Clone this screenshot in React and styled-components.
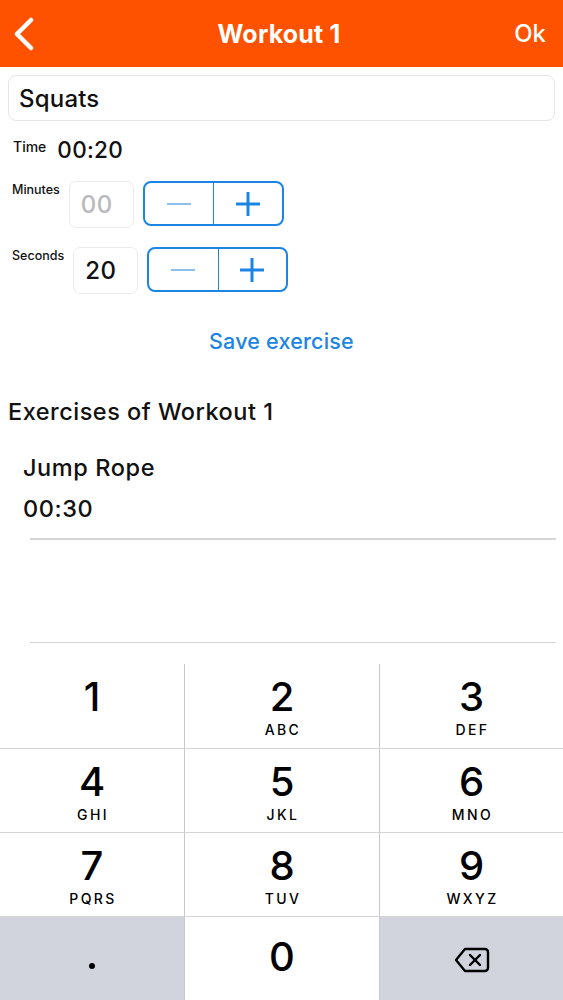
import React from "react";
import styled, { createGlobalStyle } from "styled-components";

const Global = createGlobalStyle`
  html, body { margin: 0; padding: 0; background: #fff; }
  body { font-family: Inter, "Noto Sans", "Liberation Sans", sans-serif; color: #111; }
  * { box-sizing: border-box; }
`;

const Page = styled.div`
  min-height: 100vh;
  display: flex;
  flex-direction: column;
`;

const Header = styled.header`
  height: 67px;
  background: #ff5200;
  display: grid;
  grid-template-columns: 1fr auto 1fr;
  align-items: center;
  padding: 0 17px 0 12px;
  color: #fff;
`;

const BackBtn = styled.div`
  display: flex;
  align-items: center;
`;

const Title = styled.div`
  font-size: 25px;
  font-weight: 700;
  letter-spacing: 0.2px;
`;

const OkBtn = styled.div`
  justify-self: end;
  font-size: 24px;
  font-weight: 500;
`;

const Body = styled.main`
  padding: 8px 8px 0;
  display: flex;
  flex-direction: column;
`;

const NameField = styled.div`
  height: 46px;
  border: 1px solid #e6e6e6;
  border-radius: 8px;
  display: flex;
  align-items: center;
  padding-left: 10px;
  font-size: 24px;
  font-weight: 500;
  letter-spacing: 0.2px;
`;

const TimeRow = styled.div`
  display: flex;
  align-items: flex-start;
  gap: 11px;
  margin-top: 15px;
  padding-left: 5px;
`;

const SmallLabel = styled.span`
  font-size: ${(p) => p.$size || 12.5}px;
  font-weight: 500;
  padding-top: ${(p) => p.$top || 0}px;
`;

const TimeValue = styled.span`
  font-size: 22.5px;
  font-weight: 500;
  letter-spacing: 0.3px;
`;

const StepRow = styled.div`
  display: flex;
  align-items: flex-start;
  gap: 9px;
  margin-top: ${(p) => p.$mt}px;
  padding-left: 4px;
`;

const NumBox = styled.div`
  width: 65px;
  height: 47px;
  border: 1px solid #ececec;
  border-radius: 7px;
  display: flex;
  align-items: center;
  padding-left: 11px;
  font-size: 24px;
  font-weight: 500;
  letter-spacing: 0.5px;
  color: ${(p) => (p.$placeholder ? "#b9b9bd" : "#111")};
`;

const Stepper = styled.div`
  width: 141px;
  height: 45px;
  border: 2px solid #1c84e3;
  border-radius: 8px;
  display: grid;
  grid-template-columns: 1fr 1fr;
  overflow: hidden;
`;

const StepBtn = styled.div`
  display: flex;
  align-items: center;
  justify-content: center;
  border-left: ${(p) => (p.$divider ? "1px solid #1c84e3" : "none")};
`;

const SaveLink = styled.div`
  margin-top: 34px;
  text-align: center;
  color: #1c84e3;
  font-size: 21.5px;
  font-weight: 500;
  letter-spacing: 0.2px;
`;

const SectionTitle = styled.h2`
  margin: 43px 0 0;
  font-size: 23.5px;
  font-weight: 500;
  letter-spacing: 0.5px;
`;

const ExerciseItem = styled.div`
  padding: 0 0 0 15px;
  margin-top: 27px;
  display: flex;
  flex-direction: column;
  gap: 12px;
  font-size: 23.5px;
  font-weight: 500;
  letter-spacing: 0.6px;
`;

const Divider = styled.div`
  height: 1.5px;
  background: #d6d6d6;
  margin: ${(p) => p.$mt}px -1px 0 22px;
`;

const Keyboard = styled.div`
  margin-top: auto;
  display: grid;
  grid-template-columns: 184px 1fr 184px;
  grid-auto-rows: 84px;
`;

const Key = styled.div`
  background: ${(p) => (p.$gray ? "#d1d4dc" : "#fff")};
  border-top: ${(p) => (p.$first ? "none" : "1px solid #d5d5d8")};
  border-left: ${(p) => (p.$col > 0 ? "1px solid #c9c9cc" : "none")};
  display: flex;
  flex-direction: column;
  align-items: center;
  padding-top: ${(p) => p.$pt || 10}px;
  color: #000;
`;

const Digit = styled.span`
  font-size: 40px;
  font-weight: 500;
  line-height: 46px;
`;

const Letters = styled.span`
  font-size: 14px;
  font-weight: 500;
  letter-spacing: 2.4px;
  line-height: 18px;
  margin-top: 1px;
  padding-left: 2px;
`;

const Dot = styled.span`
  width: 6px;
  height: 6px;
  border-radius: 50%;
  background: #000;
  margin-top: 36px;
`;

const Minus = ({ color }) => (
  <svg width="26" height="4" viewBox="0 0 26 4">
    <line x1="1" y1="2" x2="25" y2="2" stroke={color} strokeWidth="2" />
  </svg>
);

const Plus = ({ color }) => (
  <svg width="26" height="26" viewBox="0 0 26 26">
    <line x1="1" y1="13" x2="25" y2="13" stroke={color} strokeWidth="3" />
    <line x1="13" y1="1" x2="13" y2="25" stroke={color} strokeWidth="3" />
  </svg>
);

const StepperControl = () => (
  <Stepper>
    <StepBtn>
      <Minus color="#8ec0ef" />
    </StepBtn>
    <StepBtn $divider>
      <Plus color="#1c84e3" />
    </StepBtn>
  </Stepper>
);

const keys = [
  ["1", ""],
  ["2", "ABC"],
  ["3", "DEF"],
  ["4", "GHI"],
  ["5", "JKL"],
  ["6", "MNO"],
  ["7", "PQRS"],
  ["8", "TUV"],
  ["9", "WXYZ"],
];

export default function App() {
  return (
    <Page>
      <Global />
      <Header>
        <BackBtn>
          <svg width="24" height="34" viewBox="0 0 24 34">
            <polyline
              points="19,3 5,17 19,31"
              fill="none"
              stroke="#fff"
              strokeWidth="4.5"
              strokeLinecap="round"
              strokeLinejoin="round"
            />
          </svg>
        </BackBtn>
        <Title>Workout 1</Title>
        <OkBtn>Ok</OkBtn>
      </Header>
      <Body>
        <NameField>Squats</NameField>
        <TimeRow>
          <SmallLabel $size={14} $top={2}>Time</SmallLabel>
          <TimeValue>00:20</TimeValue>
        </TimeRow>
        <StepRow $mt={18}>
          <SmallLabel $top={1}>Minutes</SmallLabel>
          <NumBox $placeholder>00</NumBox>
          <StepperControl />
        </StepRow>
        <StepRow $mt={19}>
          <SmallLabel $top={1}>Seconds</SmallLabel>
          <NumBox>20</NumBox>
          <StepperControl />
        </StepRow>
        <SaveLink>Save exercise</SaveLink>
        <SectionTitle>Exercises of Workout 1</SectionTitle>
        <ExerciseItem>
          <span>Jump Rope</span>
          <span>00:30</span>
        </ExerciseItem>
        <Divider $mt={15} />
        <Divider $mt={102} />
      </Body>
      <Keyboard>
        {keys.map(([d, l], i) => (
          <Key key={d} $col={i % 3} $first={i < 3}>
            <Digit>{d}</Digit>
            {l && <Letters>{l}</Letters>}
          </Key>
        ))}
        <Key $gray $col={0}>
          <Dot />
        </Key>
        <Key $col={1} $pt={17}>
          <Digit>0</Digit>
        </Key>
        <Key $gray $col={2} $pt={30}>
          <svg width="36" height="26" viewBox="0 0 36 26">
            <path
              d="M11 2 H31 a3 3 0 0 1 3 3 V21 a3 3 0 0 1 -3 3 H11 L2 13 Z"
              fill="none"
              stroke="#000"
              strokeWidth="2.4"
              strokeLinejoin="round"
            />
            <line x1="16" y1="8" x2="26" y2="18" stroke="#000" strokeWidth="2.4" strokeLinecap="round" />
            <line x1="26" y1="8" x2="16" y2="18" stroke="#000" strokeWidth="2.4" strokeLinecap="round" />
          </svg>
        </Key>
      </Keyboard>
    </Page>
  );
}
